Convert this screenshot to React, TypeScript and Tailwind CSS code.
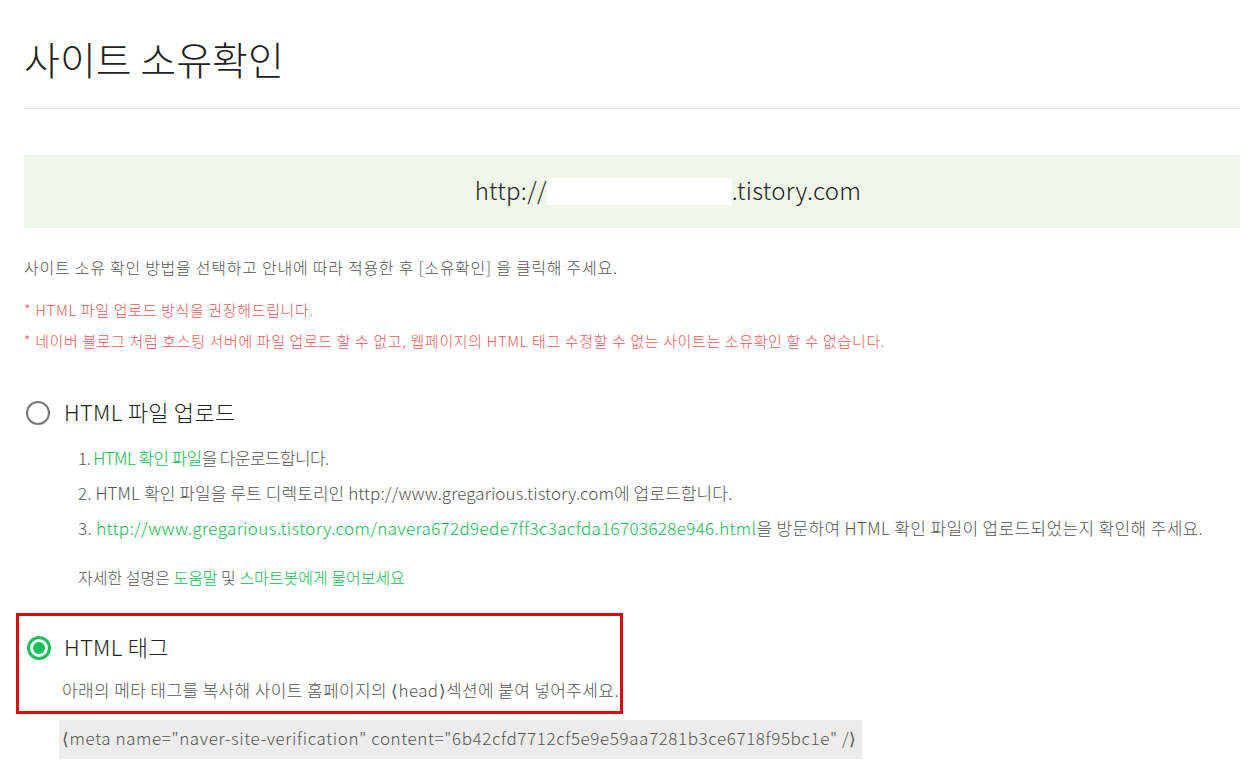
import React from "react";

const font = { fontFamily: '"Noto Sans CJK KR", "Noto Sans", sans-serif' };

function Radio({ checked }: { checked?: boolean }) {
  return (
    <svg width="26" height="26" viewBox="0 0 26 26" className="shrink-0">
      {checked ? (
        <>
          <circle cx="13" cy="13" r="10.5" fill="none" stroke="#16c15b" strokeWidth="3" />
          <circle cx="13" cy="13" r="6" fill="#16c15b" />
        </>
      ) : (
        <circle cx="13" cy="13" r="11" fill="none" stroke="#777" strokeWidth="2" />
      )}
    </svg>
  );
}

export default function App() {
  return (
    <div className="w-[1240px] h-[777px] overflow-hidden bg-white pl-[24px] text-[#333] font-light" style={font}>
      <div className="pt-[30px] pb-[22px] border-b border-[#e2e2e2] w-[1288px]">
        <h1 className="text-[39px] leading-[56px] font-light text-[#222]">사이트 소유확인</h1>
      </div>

      <div className="mt-[46px] w-[1288px] h-[73px] bg-[#f0f6e9] flex items-center justify-center text-[24px] tracking-[0.3px] text-[#222]">
        <span className="-mt-[3px]">http://</span>
        <span className="inline-block w-[185px] h-[27px] bg-white"></span>
        <span className="-mt-[3px]">.tistory.com</span>
      </div>

      <p className="mt-[27px] text-[16px] leading-[24px] text-[#555] tracking-[0.75px]">
        사이트 소유 확인 방법을 선택하고 안내에 따라 적용한 후 [소유확인] 을 클릭해 주세요.
      </p>
      <p className="mt-[19px] text-[15px] leading-[24px] text-[#ef5a5a] tracking-[0.65px]">* HTML 파일 업로드 방식을 권장해드립니다.</p>
      <p className="mt-[7px] text-[15px] leading-[24px] text-[#ef5a5a] tracking-[0.62px]">
        * 네이버 블로그 처럼 호스팅 서버에 파일 업로드 할 수 없고, 웹페이지의 HTML 태그 수정할 수 없는 사이트는 소유확인 할 수 없습니다.
      </p>

      <div className="mt-[45px] flex items-center gap-[13px] pl-[1px] h-[30px]">
        <Radio />
        <span className="text-[22px] leading-[26px] pb-[4px] text-[#222] tracking-[0.3px]">HTML 파일 업로드</span>
      </div>
      <div className="pl-[54px] mt-[12px] text-[17px] leading-[35px] text-[#555]">
        <p className="tracking-[-0.6px]">
          1. <span className="text-[#14b956]">HTML 확인 파일</span>을 다운로드합니다.
        </p>
        <p className="tracking-[0.1px]">2. HTML 확인 파일을 루트 디렉토리인 http://www.gregarious.tistory.com에 업로드합니다.</p>
        <p className="tracking-[0.35px]">
          3. <span className="text-[#14b956]">http://www.gregarious.tistory.com/navera672d9ede7ff3c3acfda16703628e946.html</span>을 방문하여 HTML 확인 파일이 업로드되었는지 확인해 주세요.
        </p>
        <p className="mt-[15px] text-[16px]">
          자세한 설명은 <span className="text-[#14b956]">도움말</span> 및 <span className="text-[#14b956]">스마트봇에게 물어보세요</span>
        </p>
      </div>

      <div className="mt-[18px] -ml-[8px] w-[607px] h-[101px] border-[3px] border-[#dd0a0a] pl-[6px]">
        <div className="mt-[17px] flex items-center gap-[12px] pl-[1px] h-[30px]">
          <Radio checked />
          <span className="text-[22px] leading-[26px] pb-[4px] text-[#222] tracking-[0.3px]">HTML 태그</span>
        </div>
        <p className="mt-[15px] pl-[37px] text-[17px] leading-[24px] text-[#555] tracking-[0.38px]">
          아래의 메타 태그를 복사해 사이트 홈페이지의 ⟨head⟩섹션에 붙여 넣어주세요.
        </p>
      </div>

      <div className="mt-[6px] ml-[35px] w-[803px] h-[39px] bg-[#ececec] flex items-center pl-[3px] pb-[3px] text-[17px] text-[#555] tracking-[0.6px]">
        ⟨meta name="naver-site-verification" content="6b42cfd7712cf5e9e59aa7281b3ce6718f95bc1e" /⟩
      </div>
    </div>
  );
}
